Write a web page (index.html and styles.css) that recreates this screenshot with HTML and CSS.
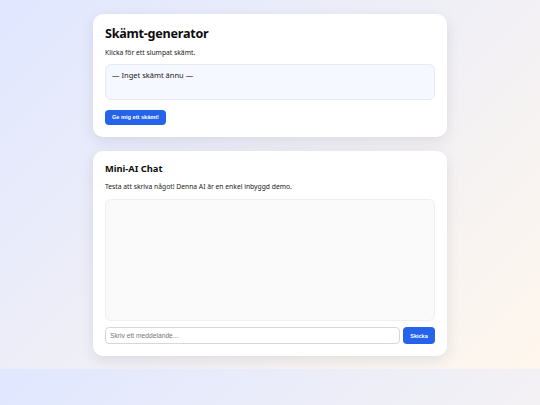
FILE: index.html
```html
<!DOCTYPE html>
<html lang="sv">
<head>
<meta charset="utf-8">
<title>Skämt-generator</title>
<link rel="stylesheet" href="styles.css">
</head>
<body>
<main class="page">
  <section class="card">
    <h1 class="title">Skämt-generator</h1>
    <p class="desc">Klicka för ett slumpat skämt.</p>
    <div class="joke">— Inget skämt ännu —</div>
    <button class="btn btn-joke" type="button">Ge mig ett skämt!</button>
  </section>
  <section class="card">
    <h2 class="subtitle">Mini-AI Chat</h2>
    <p class="desc desc-chat">Testa att skriva något! Denna AI är en enkel inbyggd demo.</p>
    <div class="chat"></div>
    <form class="chat-form" onsubmit="return false">
      <input class="chat-input" type="text" placeholder="Skriv ett meddelande...">
      <button class="btn btn-send" type="submit">Skicka</button>
    </form>
  </section>
</main>
</body>
</html>
```
FILE: styles.css
```css
body {
  margin: 0;
  padding: 13.5px 0 13px;
  font-family: "Noto Sans", "Open Sans", sans-serif;
  color: #111;
  background: linear-gradient(135deg, #e0e7ff, #fff7ed);
}

.page {
  width: 354px;
  margin: 0 auto;
  display: flex;
  flex-direction: column;
  gap: 14px;
}

.card {
  background: #ffffff;
  border-radius: 10px;
  padding: 12px;
  box-shadow: 0 4px 14px rgba(30, 41, 59, 0.10);
}

.title {
  margin: 0;
  font-size: 12.6px;
  letter-spacing: -0.25px;
  line-height: 16px;
  font-weight: 700;
  color: #0d0d0d;
}

.subtitle {
  margin: 0;
  font-size: 9.3px;
  line-height: 12.5px;
  font-weight: 700;
  color: #0d0d0d;
}

.desc {
  margin: 6.4px 0;
  font-size: 6.75px;
  line-height: 10px;
  color: #1a1a1a;
}

.desc-chat {
  margin: 6.4px 0 6.9px;
}

.joke {
  box-sizing: border-box;
  min-height: 36px;
  padding: 4.5px 6px;
  font-size: 7.5px;
  line-height: 10px;
  color: #1a1a1a;
  background: #f5f8ff;
  border: 1px solid #e5eaf3;
  border-radius: 6px;
}

.btn {
  font-family: "Liberation Sans", Arial, sans-serif;
  font-weight: 700;
  color: #fff;
  background: #2563eb;
  border: none;
  border-radius: 4px;
  cursor: pointer;
}

.btn-joke {
  display: block;
  margin-top: 10px;
  height: 15px;
  padding: 0 7px;
  font-size: 5.6px;
  line-height: 15px;
}

.chat {
  box-sizing: border-box;
  height: 122px;
  background: #fafafa;
  border: 1px solid #efefef;
  border-radius: 6px;
}

.chat-form {
  margin: 6px 0 0;
  display: flex;
  gap: 3px;
  align-items: center;
}

.chat-input {
  flex: 1;
  box-sizing: border-box;
  height: 16.5px;
  padding: 0 4px;
  font-family: "Liberation Sans", Arial, sans-serif;
  font-size: 6.7px;
  border: 1px solid #d4d7dd;
  border-radius: 4px;
  background: #fff;
  color: #111;
}

.chat-input::placeholder {
  color: #777;
}

.btn-send {
  width: 32px;
  height: 17px;
  padding: 0;
  font-size: 5.5px;
  border-radius: 4px;
}
```
